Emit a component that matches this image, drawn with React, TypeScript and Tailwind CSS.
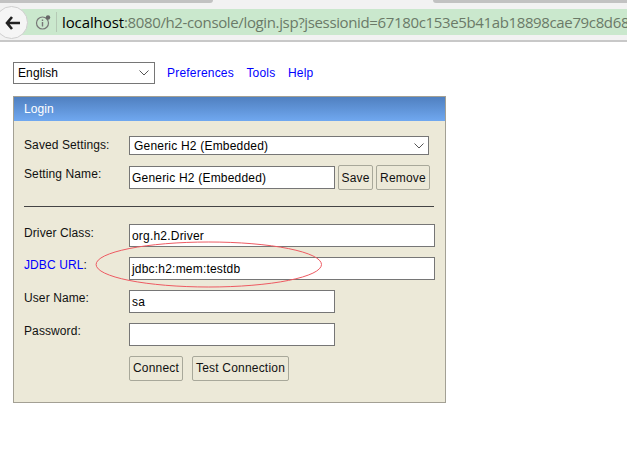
const sans = "font-['Liberation_Sans',Arial,sans-serif]";

function Chevron() {
  return (
    <svg width="10" height="6" viewBox="0 0 10 6" className="shrink-0">
      <path d="M0.5 0.5 L5 5 L9.5 0.5" fill="none" stroke="#555" strokeWidth="1" />
    </svg>
  );
}

function Btn({ children, w, up }: { children: string; w: string; up?: boolean }) {
  return (
    <div className={`${w} h-[25px] flex items-center justify-center border border-[#a8a89a] rounded-[2px] bg-[#ece9d8] text-[12px] tracking-[0.2px] text-[#111] ${up ? "pb-[2px]" : ""}`}>
      {children}
    </div>
  );
}

function Input({ value, w }: { value: string; w: string }) {
  return (
    <div className={`${w} h-[23px] flex items-center px-[2px] bg-white border border-[#767676] text-[12px] tracking-[0.2px] text-black`}>
      {value}
    </div>
  );
}

function Row({ label, blue, value, w, mt, low }: { label: string; blue?: boolean; value: string; w: string; mt: string; low?: boolean }) {
  return (
    <div className={`flex ${mt}`}>
      <div className={`w-[105px] ${low ? "pt-[2px]" : "pt-[1px]"} text-[12px] leading-[14px] tracking-[0.1px] text-[#111]`}>
        {blue ? (
          <>
            <span className="text-[#0000ff]">{label}</span>:
          </>
        ) : (
          label
        )}
      </div>
      <Input value={value} w={w} />
    </div>
  );
}

export default function App() {
  return (
    <div className={`relative w-[627px] h-[452px] overflow-hidden bg-white ${sans}`}>
      <div className="h-[42px] bg-[#f2f2f2] border-b-2 border-[#c8c8c8] overflow-hidden">
        <div className="h-[3px] flex justify-between">
          <div className="w-[213px] bg-[#c2c2c2] rounded-br-[6px]" />
          <div className="w-[194px] bg-[#c2c2c2] rounded-bl-[6px]" />
        </div>
        <div className="mt-[6px] h-[26px] ml-[15px] pl-[20px] flex items-center bg-[#cae8cd] relative">
          <svg width="17" height="17" viewBox="0 0 17 17" className="ml-0 shrink-0">
            <circle cx="7.5" cy="9" r="6" fill="none" stroke="#777" strokeWidth="1.2" />
            <path d="M7.5 8 V12.5 M7.5 5.5 V7" stroke="#777" strokeWidth="1.4" />
            <circle cx="13" cy="3.5" r="2.2" fill="#666" />
          </svg>
          <div className="w-px h-[20px] bg-[#b5c9b5] ml-[4px] mr-[5px] shrink-0" />
          <div className="font-['Open_Sans',sans-serif] text-[15px] whitespace-nowrap tracking-[-0.36px] text-[#6b7a68]">
            <span className="text-black tracking-[-0.1px]">localhost</span>:8080/h2-console/login.jsp?jsessionid=67180c153e5b41ab18898cae79c8d68
          </div>
        </div>
      </div>
      <div className="absolute left-[-5px] top-[6px] w-[33px] h-[33px] rounded-full bg-[#f5f5f5] border border-[#cfcfcf] flex items-center justify-center">
        <svg width="16" height="14" viewBox="0 0 16 14" className="ml-[3px]">
          <path d="M7 1 L2 7 L7 13 M2.5 7 H15" fill="none" stroke="#222" strokeWidth="2.6" />
        </svg>
      </div>

      <div className="px-[13px] pt-[20px]">
        <div className="flex items-center h-[22px]">
          <div className="w-[142px] h-[22px] flex items-center justify-between pl-[4px] pr-[5px] border border-[#767676] text-[12px] tracking-[0.1px] text-black">
            English
            <Chevron />
          </div>
          <div className="flex ml-[12px] gap-[12.5px] text-[12px] tracking-[0.2px] text-[#0000ff]">
            <span>Preferences</span>
            <span>Tools</span>
            <span>Help</span>
          </div>
        </div>

        <div className="mt-[12px] w-[433px] h-[307px] border border-[#a3a094] bg-[#ece9d8]">
          <div className="h-[24px] pl-[10px] flex items-center text-[12px] text-white tracking-[0.1px] bg-gradient-to-b from-[#5080c0] to-[#70a8f0]">
            Login
          </div>
          <div className="pl-[10px]">
            <div className="flex mt-[15px]">
              <div className="w-[105px] pt-[2px] text-[12px] leading-[14px] tracking-[0.1px] text-[#111]">Saved Settings:</div>
              <div className="w-[300px] h-[19px] flex items-center justify-between pl-[4px] pr-[4px] bg-white border border-[#767676] text-[12px] tracking-[0.2px] text-black">
                Generic H2 (Embedded)
                <Chevron />
              </div>
            </div>
            <div className="flex mt-[10px] h-[25px]">
              <div className="w-[105px] pt-[2px] text-[12px] leading-[14px] tracking-[0.1px] text-[#111]">Setting Name:</div>
              <div className="mt-[1px]">
                <Input value="Generic H2 (Embedded)" w="w-[206px]" />
              </div>
              <div className="flex ml-[3px] gap-[3px]">
                <Btn w="w-[35px]">Save</Btn>
                <Btn w="w-[54px]">Remove</Btn>
              </div>
            </div>
            <div className="mt-[16px] w-[410px] h-px bg-[#444]" />
            <Row label="Driver Class:" value="org.h2.Driver" w="w-[306px]" mt="mt-[17px]" low />
            <Row label="JDBC URL" blue value="jdbc:h2:mem:testdb" w="w-[306px]" mt="mt-[10px]" />
            <Row label="User Name:" value="sa" w="w-[206px]" mt="mt-[10px]" />
            <Row label="Password:" value="" w="w-[206px]" mt="mt-[10px]" />
            <div className="flex mt-[10px] ml-[105px] gap-[9px]">
              <Btn w="w-[54px]" up>Connect</Btn>
              <Btn w="w-[97px]" up>Test Connection</Btn>
            </div>
          </div>
        </div>
      </div>

      <svg className="absolute left-[90px] top-[238px]" width="240" height="56" viewBox="0 0 240 56">
        <ellipse cx="118.8" cy="26.5" rx="112.7" ry="22.5" fill="none" stroke="#ee5a62" strokeWidth="1" />
      </svg>
    </div>
  );
}
